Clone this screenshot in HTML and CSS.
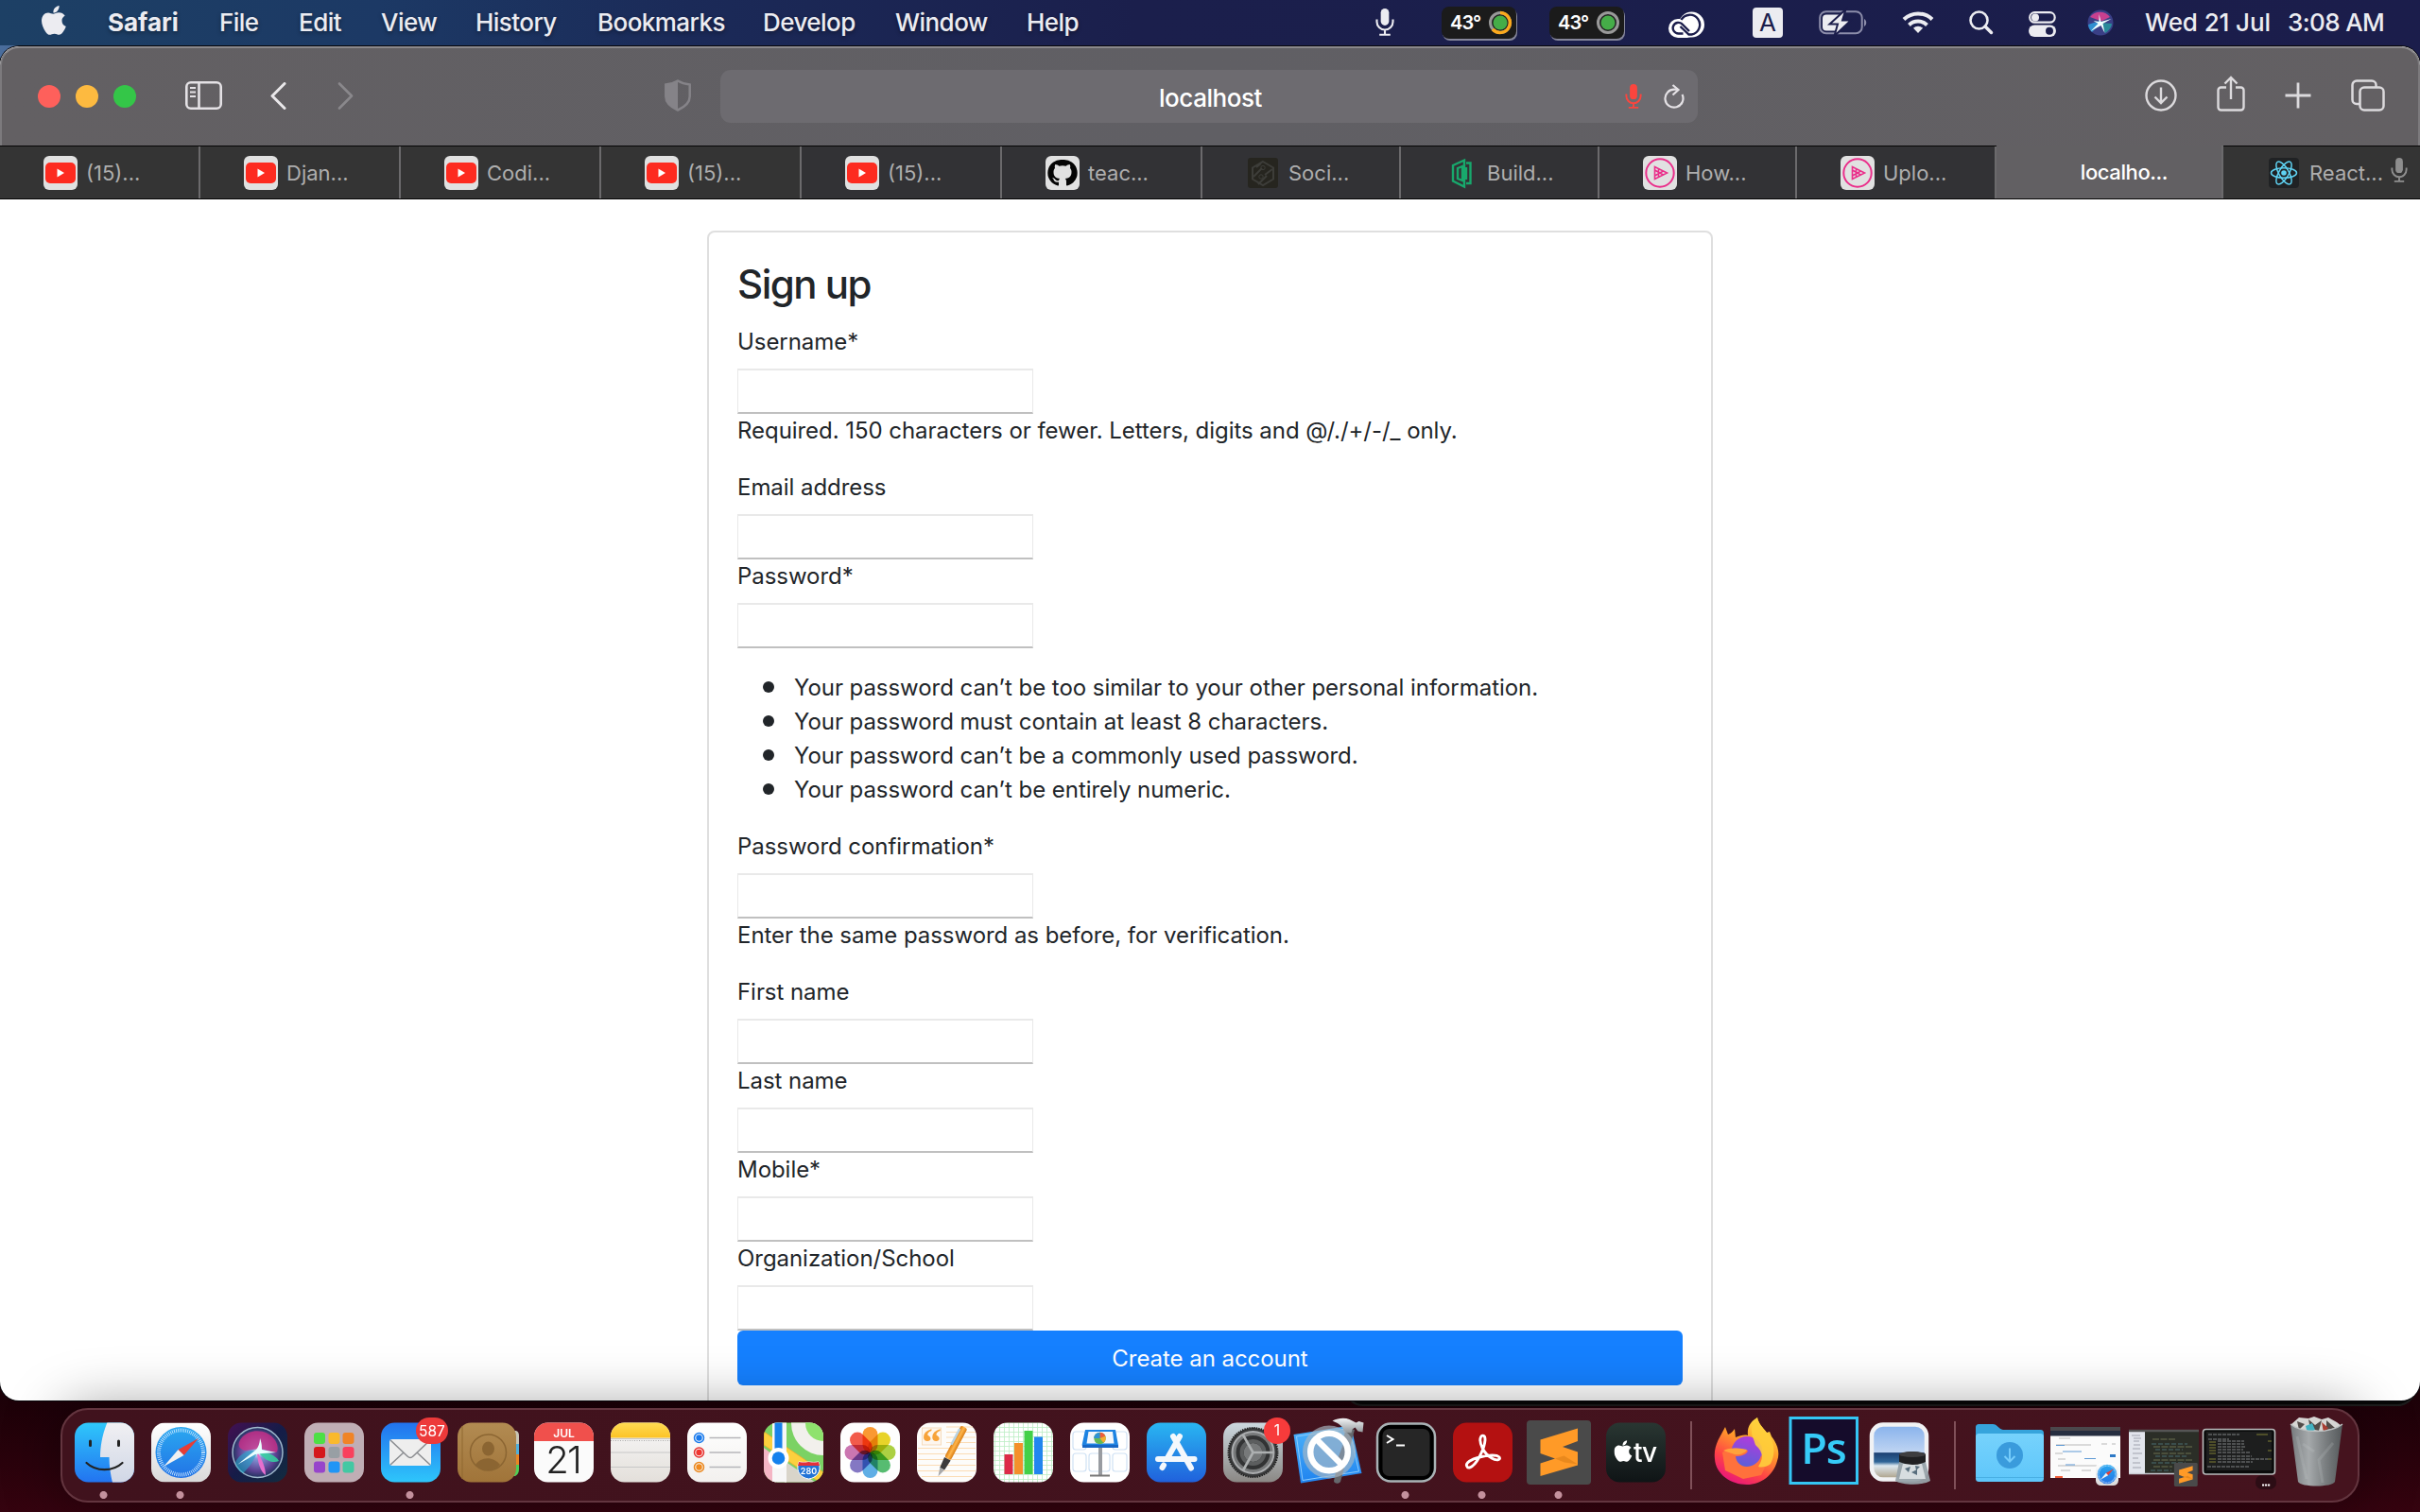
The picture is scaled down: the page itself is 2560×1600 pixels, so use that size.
FILE: index.html
```html
<!DOCTYPE html>
<html lang="en">
<head>
<meta charset="utf-8">
<title>Sign up</title>
<link rel="stylesheet" href="styles.css">
</head>
<body>
<svg class="defs" width="0" height="0" aria-hidden="true">
  <defs>
    <linearGradient id="gFinder" x2="0" y2="1"><stop stop-color="#2fc8fb"/><stop offset="1" stop-color="#2273f0"/></linearGradient>
    <linearGradient id="gFace" x2="0" y2="1"><stop stop-color="#f1f0f3"/><stop offset="1" stop-color="#d0d7e6"/></linearGradient>
    <linearGradient id="gWhite" x2="0" y2="1"><stop stop-color="#fff"/><stop offset="1" stop-color="#d9d9d9"/></linearGradient>
    <linearGradient id="gSoft" x2="0" y2="1"><stop stop-color="#fff"/><stop offset="1" stop-color="#f2f0ee"/></linearGradient>
    <linearGradient id="gCompass" x2="0" y2="1"><stop stop-color="#2aa8f0"/><stop offset="1" stop-color="#2273e6"/></linearGradient>
    <linearGradient id="gMail" x2="0" y2="1"><stop stop-color="#2272ee"/><stop offset="1" stop-color="#2ec6fb"/></linearGradient>
    <linearGradient id="gStore" x2="0" y2="1"><stop stop-color="#29b6f2"/><stop offset="1" stop-color="#2061dc"/></linearGradient>
    <linearGradient id="gBook" x2="0" y2="1"><stop stop-color="#b28b52"/><stop offset="1" stop-color="#a07439"/></linearGradient>
    <linearGradient id="gYellow" x2="0" y2="1"><stop stop-color="#ffdc55"/><stop offset="1" stop-color="#fcc325"/></linearGradient>
    <linearGradient id="gNote" x2="0" y2="1"><stop stop-color="#f8f8f8"/><stop offset="1" stop-color="#e3dfda"/></linearGradient>
    <linearGradient id="gGear" x2="0" y2="1"><stop stop-color="#ccd8df"/><stop offset="1" stop-color="#8b8885"/></linearGradient>
    <linearGradient id="gSiri" x2="1" y2="1"><stop stop-color="#431052"/><stop offset=".5" stop-color="#151c48"/><stop offset="1" stop-color="#122c40"/></linearGradient>
    <radialGradient id="gOrb" cx=".5" cy=".5" r=".5"><stop stop-color="#e9ffff"/><stop offset=".25" stop-color="#8297d6"/><stop offset=".75" stop-color="#5a4090"/><stop offset="1" stop-color="#20345e"/></radialGradient>
    <linearGradient id="gTv" x2="0" y2="1"><stop stop-color="#293632"/><stop offset="1" stop-color="#0f1416"/></linearGradient>
    <linearGradient id="gFox" x1=".8" y1="0" x2=".3" y2="1"><stop stop-color="#fff04a"/><stop offset=".4" stop-color="#ff9a2a"/><stop offset=".72" stop-color="#ff4346"/><stop offset="1" stop-color="#e8157c"/></linearGradient>
    <linearGradient id="gFoxOrb" x1=".6" x2=".3" y2="1"><stop stop-color="#b13bdc"/><stop offset="1" stop-color="#5562d8"/></linearGradient>
    <linearGradient id="gSky" x2="0" y2="1"><stop stop-color="#86b1ec"/><stop offset=".5" stop-color="#bed4f2"/><stop offset=".52" stop-color="#1d4173"/><stop offset=".68" stop-color="#2f6597"/><stop offset=".75" stop-color="#dde9f1"/><stop offset="1" stop-color="#a99a7f"/></linearGradient>
    <linearGradient id="gTrash"><stop stop-color="#777b7e"/><stop offset=".35" stop-color="#a5a9ab"/><stop offset=".7" stop-color="#777b7d"/><stop offset="1" stop-color="#55595b"/></linearGradient>
    <linearGradient id="gFolder" x2="0" y2="1"><stop stop-color="#76d2fc"/><stop offset="1" stop-color="#5ec6fa"/></linearGradient>
    <linearGradient id="gPen"><stop stop-color="#d97c12"/><stop offset=".5" stop-color="#ffb64c"/><stop offset="1" stop-color="#d97c12"/></linearGradient>
    <linearGradient id="gPlan" x2="0" y2="1"><stop stop-color="#4db4fb"/><stop offset="1" stop-color="#1f83ef"/></linearGradient>
    <linearGradient id="gSteel" x2="0" y2="1"><stop stop-color="#f3f5f6"/><stop offset="1" stop-color="#8f9599"/></linearGradient>
    <pattern id="pGrid" width="5" height="5" patternUnits="userSpaceOnUse"><rect width="5" height="5" fill="#fff"/><path d="M0 .5H5M.5 0V5" stroke="#bdeec4" stroke-width=".8"/></pattern>
    <clipPath id="tileClip"><rect x="9" y="15.500" width="63" height="63" rx="14.500"/></clipPath>
    <symbol id="apple" viewBox="0 0 26 31"><path fill="currentColor" d="M18.600 0c.2 2.200-.6 4-1.800 5.400-1.200 1.400-2.700 2.200-4.400 2.100-.2-2 .6-3.900 1.800-5.200C15.400 1 17.200.1 18.600 0zM24.700 10.600c-2.200 1.400-3.300 3.200-3.200 5.500 0 2.800 1.600 4.900 4.300 6-.6 1.900-1.600 3.700-2.900 5.500-1.500 2.100-2.800 3.200-4.400 3.200-1.900 0-2.600-1.100-4.900-1.100-2.400 0-3.300 1.100-5 1.100-1.700 0-3-1.300-4.500-3.400C2.100 24.500 0 20.200 0 16.100c0-5.500 3.300-8.700 7-8.700 2 0 3.900 1.300 5.300 1.300 1.300 0 3.400-1.400 6-1.400 2.600 0 4.900 1.200 6.400 3.300z"/></symbol>
    <symbol id="mic" viewBox="0 0 20 30"><rect x="5.500" width="9" height="18.500" rx="4.500" fill="currentColor"/><path d="M1.200 12v2.500a8.800 8.800 0 0 0 17.600 0V12M10 23.500V28M4 28.700H16" fill="none" stroke="currentColor" stroke-width="2.200"/></symbol>
    <symbol id="youtube" viewBox="0 0 36 36"><rect width="36" height="36" rx="6" fill="#e1e1e1"/><rect x="2" y="7" width="32" height="22" rx="5" fill="#fd2b20"/><path d="M14.500 13.500v9l7.500-4.500z" fill="#fff"/></symbol>
    <symbol id="hexplay" viewBox="0 0 36 36"><rect width="36" height="36" rx="6" fill="#e1e1e1"/><circle cx="18" cy="18" r="14.700" fill="none" stroke="#ea2f8b" stroke-width="2"/><path d="M12.500 11.500v13l13-6.500zM16.500 13.500v9M12.500 15l9 5M12.500 21l9-5" fill="none" stroke="#ea2f8b" stroke-width="1.600"/></symbol>
    <symbol id="compass" viewBox="0 0 63 63"><rect width="63" height="63" rx="14.500" fill="url(#gWhite)"/><circle cx="31.500" cy="31.500" r="27" fill="url(#gCompass)"/><circle cx="31.500" cy="31.500" r="23.500" fill="none" stroke="#d4ecff" stroke-width="4" stroke-dasharray=".8 1.250"/><path d="M50 16.500L34.500 34.500 28.500 28.500z" fill="#e73d35"/><path d="M13 46.500L28.500 28.500l6 6z" fill="#f1f1f1"/></symbol>
    <symbol id="sublime" viewBox="0 0 68 68"><rect width="68" height="68" rx="4" fill="#4a4a4a"/><path d="M14.500 20.500L54 8.500v13.500L38 28l16 5.500v14L14.500 59V45.500L30 40.500l-15.500-5.500z" fill="#ff9a27"/><path d="M30 40.500l9.500-3L54 46.500l-14-2z" fill="#e0811a" opacity=".7"/></symbol>
  </defs>
</svg>

<header class="menubar">
  <nav class="menus">
    <svg class="apple" width="26" height="31"><use href="#apple"/></svg>
    <b>Safari</b><span>File</span><span>Edit</span><span>View</span><span>History</span><span>Bookmarks</span><span>Develop</span><span>Window</span><span>Help</span>
  </nav>
  <div class="status">
    <svg class="s-mic" width="20" height="29"><use href="#mic"/></svg>
    <div class="pill"><span>43°</span><svg width="26" height="26" viewBox="0 0 26 26"><circle cx="13" cy="13" r="10.500" fill="#222" stroke="#999" stroke-width="3"/><path d="M13 2.500a10.500 10.500 0 1 1-8 17.500" fill="none" stroke="#fca91c" stroke-width="3.500"/><circle cx="13" cy="13" r="7.500" fill="#45ad48"/></svg></div>
    <div class="pill"><span>43°</span><svg width="26" height="26" viewBox="0 0 26 26"><circle cx="13" cy="13" r="10.500" fill="#222" stroke="#999" stroke-width="3"/><circle cx="13" cy="13" r="7.500" fill="#45ad48"/></svg></div>
    <svg class="s-cc" width="38" height="28" viewBox="0 0 38 28"><rect y="8" width="30" height="20" rx="10" fill="#fff"/><circle cx="24.500" cy="14" r="13.500" fill="#fff"/><path d="M15.500 23.500H10.500a5.800 5.800 0 1 1 4-10l7.500 7.500M13.500 9a10.500 10.500 0 1 1 11 15.500h-3L12.500 16" fill="none" stroke="#1b1d4b" stroke-width="2.400"/></svg>
    <span class="keybox">A</span>
    <svg class="s-bat" width="51" height="26" viewBox="0 0 51 26" fill="none"><rect x="1.200" y="1.200" width="44.500" height="23" rx="6.500" stroke="#8c8daa" stroke-width="2"/><path d="M48 9c3 1.500 3 6.500 0 8z" fill="#8c8daa"/><rect x="4" y="4.500" width="20" height="17" rx="4" fill="#ececf1"/><path d="M28.500-1L11.500 14.500H20L16.500 27 34 10.500H25z" fill="#ececf1" stroke="#1b1d4b" stroke-width="2"/></svg>
    <svg class="s-wifi" width="34" height="25" viewBox="0 0 34 25" fill="none" stroke="#ececf1" stroke-width="4"><path d="M2 9.500a21.500 21.500 0 0 1 30 0M7.500 15.500a13.500 13.500 0 0 1 19 0"/><path d="M17 24l-5-5.200a7 7 0 0 1 10 0z" fill="#ececf1" stroke="none"/></svg>
    <svg class="s-find" width="26" height="26" viewBox="0 0 26 26" fill="none" stroke="#ececf1" stroke-width="2.600"><circle cx="10.500" cy="10.500" r="9"/><path d="M17 17l6.500 6.500" stroke-width="3.500" stroke-linecap="round"/></svg>
    <svg class="s-ctl" width="29" height="27" viewBox="0 0 29 27"><rect x="1.200" y="1.200" width="26.500" height="10.500" rx="5.200" fill="none" stroke="#ececf1" stroke-width="2.200"/><circle cx="7" cy="6.500" r="4" fill="#ececf1"/><rect y="14.500" width="29" height="12.500" rx="6.200" fill="#ececf1"/><circle cx="22" cy="20.700" r="4" fill="#1b1d4b"/></svg>
    <svg class="s-siri" width="28" height="28" viewBox="0 0 28 28"><circle cx="14" cy="14" r="13.500" fill="#3a3f86"/><path d="M3 8a13 13 0 0 1 21 0l-8 4-5-1z" fill="#c9408f"/><path d="M1 16l12-4 1 3-9 9c-2-2-4-5-4-8z" fill="#2f8fd0"/><path d="M14 14l12 1c0 4-4 8-7 10z" fill="#2a8a9a"/><path d="M12.500 5l2 8 11-3-9 5 2 10-4-8-11 6 8-8-5-3 6 1z" fill="#f0ffff"/></svg>
    <span class="date">Wed 21 Jul</span><span class="time">3:08 AM</span>
  </div>
</header>

<main class="window">
  <div class="toolbar">
    <div class="lights"><i class="red"></i><i class="amber"></i><i class="green"></i></div>
    <svg class="t-side" width="39" height="30" viewBox="0 0 39 30" fill="none" stroke="#e4e1e5" stroke-width="2.600"><rect x="1.300" y="1.300" width="36.400" height="27.400" rx="4.500"/><path d="M14.500 1v28"/><path d="M5 7h6M5 11.500h6M5 16h6" stroke-width="2"/></svg>
    <svg class="t-back" width="17" height="29" viewBox="0 0 17 29" fill="none" stroke="#e9e7ea" stroke-width="3" stroke-linecap="round" stroke-linejoin="round"><path d="M15 1.500L2 14.500l13 13"/></svg>
    <svg class="t-fwd" width="17" height="29" viewBox="0 0 17 29" fill="none" stroke="#8a888c" stroke-width="2.600" stroke-linecap="round" stroke-linejoin="round"><path d="M2 1.500l13 13-13 13"/></svg>
    <svg class="t-shield" width="28" height="34" viewBox="0 0 28 34"><path d="M14 1.500C18 4 22 5 26.700 5.500V18c0 6-5 11-12.700 14.500C6.300 29 1.300 24 1.300 18V5.500C6 5 10 4 14 1.500z" fill="none" stroke="#858388" stroke-width="2.500"/><path d="M14 1.500v31C6.300 29 1.300 24 1.300 18V5.500C6 5 10 4 14 1.500z" fill="#858388"/></svg>
    <div class="address"><span>localhost</span>
      <svg class="a-mic" width="18" height="26"><use href="#mic"/></svg>
      <svg class="a-load" width="22" height="26" viewBox="0 0 22 26" fill="none" stroke="#e4e1e5" stroke-width="2.200"><path d="M19.500 11a9.500 9.500 0 1 1-8-5.300H14"/><path d="M9.500 1l6 5-6 5.500"/></svg>
    </div>
    <div class="actions">
      <svg width="34" height="34" viewBox="0 0 34 34" fill="none" stroke="#dcdadd" stroke-width="2.400"><circle cx="17" cy="17" r="15.500"/><path d="M17 8.500v16M10.500 18.500L17 25l6.500-6.500"/></svg>
      <svg class="t-share" width="30" height="38" viewBox="0 0 30 38" fill="none" stroke="#dcdadd" stroke-width="2.400"><path d="M10 12.500H4.500a3 3 0 0 0-3 3v18a3 3 0 0 0 3 3h21a3 3 0 0 0 3-3v-18a3 3 0 0 0-3-3H20M15 25V2M8.500 8.500L15 2l6.500 6.500"/></svg>
      <svg width="28" height="28" viewBox="0 0 28 28" stroke="#dcdadd" stroke-width="2.800"><path d="M14 .5v27M.5 14h27"/></svg>
      <svg width="36" height="34" viewBox="0 0 36 34" fill="none" stroke="#dcdadd" stroke-width="2.500"><rect x="9.500" y="8.500" width="25" height="24" rx="4.500"/><path d="M9 26H6a4.500 4.500 0 0 1-4.500-4.500V6A4.500 4.500 0 0 1 6 1.500h16A4.500 4.500 0 0 1 26.500 6v2"/></svg>
    </div>
  </div>
  <div class="tabs">
    <div class="tab"><svg class="fav"><use href="#youtube"/></svg>(15)...</div>
    <div class="tab"><svg class="fav"><use href="#youtube"/></svg>Djan...</div>
    <div class="tab"><svg class="fav"><use href="#youtube"/></svg>Codi...</div>
    <div class="tab"><svg class="fav"><use href="#youtube"/></svg>(15)...</div>
    <div class="tab"><svg class="fav"><use href="#youtube"/></svg>(15)...</div>
    <div class="tab"><svg class="fav" viewBox="0 0 36 36"><rect width="36" height="36" rx="6" fill="#e1e1e1"/><path fill="#050505" d="M18 4a14 14 0 0 0-5 27.500c.8.100 1-.4 1-.8v-3c-4 .8-5-1.500-5.300-2.400-.3-.8-1-1.600-1.700-2 2.400-.5 3.300 1.700 3.900 2.300.9.700 2 .7 3.200.4.100-1 .6-1.700 1.200-2-4-.5-6.800-2-6.800-7 0-1.600.5-2.900 1.500-4-.4-1.200-.3-2.700.3-4 1.700 0 3 .9 4 1.700a14 14 0 0 1 7.400 0c1-.8 2.300-1.700 4-1.700.6 1.300.7 2.800.3 4 1 1.100 1.500 2.400 1.500 4 0 5-2.800 6.500-6.800 7 .8.600 1.300 1.600 1.300 3v3.700c0 .4.300.9 1 .8A14 14 0 0 0 18 4z"/></svg>teac...</div>
    <div class="tab"><svg class="fav" viewBox="0 0 36 36"><rect x="2" y="2" width="32" height="32" rx="3" fill="#26251f"/><path d="M18 6l11 6.500v12L18 31 7 24.500v-12zM8 22l9-9M13 30l9-9M20 20l8-6M11 12l5-4" fill="none" stroke="#3d3d39" stroke-width="2"/><circle cx="18" cy="12.500" r="2.200" fill="none" stroke="#3d3d39"/><circle cx="16" cy="22" r="2.200" fill="none" stroke="#3d3d39"/></svg>Soci...</div>
    <div class="tab"><svg class="fav" viewBox="0 0 36 36" fill="none" stroke="#18a86c" stroke-width="2.400"><path d="M9 10l12-5.500v28L9 26.500zM14 13l5-2v15l-5-2zM23 7.500h4.500v21.500H23M23 12v13"/></svg>Build...</div>
    <div class="tab"><svg class="fav"><use href="#hexplay"/></svg>How...</div>
    <div class="tab"><svg class="fav"><use href="#hexplay"/></svg>Uplo...</div>
    <div class="tab active">localho...</div>
    <div class="tab last"><svg class="fav" viewBox="0 0 36 36"><rect x="2" y="2" width="32" height="32" rx="4" fill="#202224"/><g fill="none" stroke="#5fd3f3" stroke-width="1.500"><ellipse cx="18" cy="18" rx="13.500" ry="5.200"/><ellipse cx="18" cy="18" rx="13.500" ry="5.200" transform="rotate(60 18 18)"/><ellipse cx="18" cy="18" rx="13.500" ry="5.200" transform="rotate(120 18 18)"/></g><circle cx="18" cy="18" r="2.800" fill="#5fd3f3"/></svg>React...<svg class="tabmic" width="18" height="26"><use href="#mic"/></svg></div>
  </div>
  <section class="page">
    <form class="card">
      <h1>Sign up</h1>
      <label><span>Username*</span><input type="text"></label>
      <p class="help">Required. 150 characters or fewer. Letters, digits and @/./+/-/_ only.</p>
      <label><span>Email address</span><input type="email"></label>
      <label><span>Password*</span><input type="password"></label>
      <ul>
        <li>Your password can’t be too similar to your other personal information.</li>
        <li>Your password must contain at least 8 characters.</li>
        <li>Your password can’t be a commonly used password.</li>
        <li>Your password can’t be entirely numeric.</li>
      </ul>
      <label><span>Password confirmation*</span><input type="password"></label>
      <p class="help">Enter the same password as before, for verification.</p>
      <label><span>First name</span><input type="text"></label>
      <label><span>Last name</span><input type="text"></label>
      <label><span>Mobile*</span><input type="text"></label>
      <label><span>Organization/School</span><input type="text"></label>
      <button type="button">Create an account</button>
    </form>
  </section>
</main>
<div class="behind"></div>

<footer class="dock">
  <svg class="app on" viewBox="0 0 81 98"><g clip-path="url(#tileClip)"><rect x="9" y="15" width="63" height="64" fill="url(#gFinder)"/><path d="M43.500 15C37 31 36 44 36 52h9.500c0 9 1.500 19 3.500 27h24V15z" fill="url(#gFace)"/></g><path d="M25.500 35v4.500M55.500 35v4.500" stroke="#222" stroke-width="3" stroke-linecap="round"/><path d="M21.500 58c10 9.500 28 9.500 38 0" fill="none" stroke="#222" stroke-width="2.200" stroke-linecap="round"/></svg>
  <svg class="app on" viewBox="0 0 81 98"><use href="#compass" x="9" y="15.500" width="63" height="63"/></svg>
  <svg class="app" viewBox="0 0 81 98"><rect x="9" y="15.500" width="63" height="63" rx="14.500" fill="url(#gSiri)"/><circle cx="40.500" cy="47" r="26.500" fill="url(#gOrb)" stroke="#9fb8cd" stroke-width="1.500"/><path d="M24 31c8-9 26-10 35 3 4 7 3 12 1 13L43 43l-16 2c-8-2-8-8-3-14z" fill="#cf2f86" opacity=".75"/><path d="M17 58c3-9 13-14 24-13-4 9-9 18-16 24-4-2-7-6-8-11z" fill="#23a6c9" opacity=".6"/><path d="M41 46c9 0 19 4 22 10-6 3-15 0-22-10z" fill="#34d39f" opacity=".85"/><path d="M40 46c5 8 9 17 9 25-5-3-9-14-9-25z" fill="#e66fce"/><path d="M19 60l20-16c3-3 4-9 4-12 2 5 2 9 2 12l15 3-14 1-8 1z" fill="#e9ffff"/></svg>
  <svg class="app" viewBox="0 0 81 98"><rect x="9" y="15.500" width="63" height="63" rx="14.500" fill="#c0aeb5"/><g><rect x="19" y="26" width="12" height="12" rx="3" fill="#4ddf45"/><rect x="34.500" y="26" width="12" height="12" rx="3" fill="#fab92c"/><rect x="49.500" y="26" width="12" height="12" rx="3" fill="#f08427"/><rect x="19" y="41" width="12" height="12" rx="3" fill="#d5181d"/><rect x="34.500" y="41" width="12" height="12" rx="3" fill="#989fa4"/><rect x="49.500" y="41" width="12" height="12" rx="3" fill="#f9405d"/><rect x="19" y="56.500" width="12" height="12" rx="3" fill="#9745cb"/><rect x="34.500" y="56.500" width="12" height="12" rx="3" fill="#2195f5"/><rect x="49.500" y="56.500" width="12" height="12" rx="3" fill="#43c8a3"/></g></svg>
  <svg class="app on" viewBox="0 0 81 98"><rect x="9" y="15.500" width="63" height="63" rx="14.500" fill="url(#gMail)"/><rect x="18" y="33" width="44" height="28" rx="3" fill="#eee"/><path d="M19 34l18 17c2 2 4 2 6 0l18-17M19 60l14-13M61 60L47 47" fill="none" stroke="#8a8c90" stroke-width="1.500"/><rect x="46" y="10" width="34" height="28" rx="14" fill="#ed3a3a"/><text class="bdg" x="63" y="29.500">587</text></svg>
  <svg class="app" viewBox="0 0 81 98"><path d="M66 24h5q3 1 3 5v9h-8z" fill="#c9c6b6"/><path d="M66 38h8v12h-8z" fill="#4fb0dc"/><path d="M66 49h8v11h-8z" fill="#ec8523"/><path d="M66 60h8v5q0 5-4 7h-4z" fill="#4fce56"/><rect x="9" y="15.500" width="62" height="63" rx="14.500" fill="url(#gBook)"/><path d="M14 19v56" stroke="#8f6831" stroke-width="1"/><g fill="#8b6532"><path d="M28 60c6-9 19-9 26 0-7 8-19 8-26 0z"/><ellipse cx="41.500" cy="43" rx="6.500" ry="7.500"/></g><circle cx="41.500" cy="47" r="19" fill="none" stroke="#8b6532" stroke-width="1.500"/></svg>
  <svg class="app" viewBox="0 0 81 98"><g clip-path="url(#tileClip)"><rect x="9" y="15" width="63" height="64" fill="#fbfbfb"/><rect x="9" y="15" width="63" height="20" fill="#f0504c"/></g><text class="cal" x="40.500" y="31">JUL</text><text class="day" x="39.500" y="69">21</text></svg>
  <svg class="app" viewBox="0 0 81 98"><g clip-path="url(#tileClip)"><rect x="9" y="15" width="63" height="64" fill="url(#gNote)"/><rect x="9" y="15" width="63" height="16.500" fill="url(#gYellow)"/><path d="M9 32.500h63M9 47h63M9 62.500h63" stroke="#c8c8c8"/><path d="M9 34.500h63" stroke="#aaa" stroke-dasharray="1 1.500"/></g></svg>
  <svg class="app" viewBox="0 0 81 98"><rect x="9" y="15.500" width="63" height="63" rx="14.500" fill="url(#gSoft)"/><path d="M32.500 31.500h33M32.500 47h33M32.500 62.500h33" stroke="#b6b6ba" stroke-width="1.300"/><g stroke-width="1.500" fill="none"><circle cx="21.500" cy="31.500" r="5" stroke="#1879ec"/><circle cx="21.500" cy="47" r="5" stroke="#e5302f"/><circle cx="21.500" cy="62.500" r="5" stroke="#ea871d"/></g><circle cx="21.500" cy="31.500" r="3.200" fill="#1879ec"/><circle cx="21.500" cy="47" r="3.200" fill="#f03530"/><circle cx="21.500" cy="62.500" r="3.200" fill="#f18a1d"/></svg>
  <svg class="app" viewBox="0 0 81 98"><g clip-path="url(#tileClip)"><rect x="9" y="15" width="63" height="64" fill="#7bd264"/><circle cx="72" cy="16" r="34" fill="#f2f0ec"/><circle cx="72" cy="16" r="19" fill="#8fe26d"/><path d="M9 25l63 43v13L9 39z" fill="#fbd03e" stroke="#f5a92a" stroke-width=".8"/><path d="M9 42l13 10v27H9z" fill="#f4b6c5"/><path d="M31 56l33 23H31z" fill="#d9d5ca"/><path d="M18 15h15v64H18z" fill="#f7f7f7"/><path d="M20.500 15h8v32h-8z" fill="#1781eb"/></g><circle cx="24.500" cy="53" r="11" fill="#fff"/><circle cx="24.500" cy="53" r="6.800" fill="#1581ed"/><path d="M46 57q5 1 10.500 0 5.500 1 10.500 0c4 11-3 17-10.500 18C49 74 42 68 46 57z" fill="#2273d6" stroke="#fff"/><path d="M46 57q5 1 10.500 0 5.500 1 10.500 0l1 4H45z" fill="#e5303a"/><text class="road" x="56.500" y="69.500">280</text></svg>
  <svg class="app" viewBox="0 0 81 98"><rect x="9" y="15.500" width="63" height="63" rx="14.500" fill="#fefefe"/><g class="petals"><rect x="32.500" y="20" width="16" height="27" rx="8" fill="#fb9a32"/><rect x="32.500" y="20" width="16" height="27" rx="8" fill="#e9d429" transform="rotate(45 40.500 47)"/><rect x="32.500" y="20" width="16" height="27" rx="8" fill="#add142" transform="rotate(90 40.500 47)"/><rect x="32.500" y="20" width="16" height="27" rx="8" fill="#57bd71" transform="rotate(135 40.500 47)"/><rect x="32.500" y="20" width="16" height="27" rx="8" fill="#5fafe6" transform="rotate(180 40.500 47)"/><rect x="32.500" y="20" width="16" height="27" rx="8" fill="#8578c4" transform="rotate(225 40.500 47)"/><rect x="32.500" y="20" width="16" height="27" rx="8" fill="#cc76b2" transform="rotate(270 40.500 47)"/><rect x="32.500" y="20" width="16" height="27" rx="8" fill="#f35b4b" transform="rotate(315 40.500 47)"/></g></svg>
  <svg class="app" viewBox="0 0 81 98"><rect x="9" y="15.500" width="63" height="63" rx="14.500" fill="#fdfcfa"/><path d="M40 20h28M40 25.500h31M40 31h31M40 36.500h31M10 42.500h61M10 48.500h61M10 54.500h61M10 60.500h61M10 66.500h61M14 72.500h53" stroke="#fbdcb4" stroke-width="1.200"/><rect x="14.500" y="21" width="20" height="18" fill="#fdf6ee" stroke="#f6dcbd"/><text class="quote" x="24.500" y="50">“</text><g transform="rotate(28 43 50)"><rect x="39.500" y="16" width="7.500" height="38" rx="2.500" fill="url(#gPen)"/><path d="M39.500 54H47l-1 12h-5.500z" fill="#3b3b3d"/><path d="M40.500 66H46l-2.800 9z" fill="#aaa"/><path d="M39.800 20v19" stroke="#b8d3e3" stroke-width="2.500"/></g></svg>
  <svg class="app" viewBox="0 0 81 98"><rect x="9" y="15.500" width="63" height="63" rx="14.500" fill="url(#pGrid)"/><path d="M20.500 49h9v21h-9z" fill="#dd2b48"/><path d="M31 37h9v33h-9z" fill="#f4902b"/><path d="M41.500 24h9v46h-9z" fill="#43d048"/><path d="M52 30.500h9V70h-9z" fill="#2186ee"/></svg>
  <svg class="app" viewBox="0 0 81 98"><rect x="9" y="15.500" width="63" height="63" rx="14.500" fill="#fff"/><g fill="none" stroke="#cfe1f4" stroke-width="1.200"><rect x="12" y="25" width="14" height="19" rx="3"/><rect x="12" y="48" width="14" height="19" rx="3"/><rect x="29" y="48" width="22" height="19" rx="3"/><rect x="54" y="25" width="15" height="19" rx="3"/><rect x="54" y="48" width="15" height="19" rx="3"/></g><path d="M39 40h4v31h-4z" fill="#999ca1"/><path d="M30 70.500h21v2H30z" fill="#777"/><path d="M25 23h32l3 16.500H21.500z" fill="#1d83e2"/><path d="M28.500 25h25.500l1.500 12.500H26.500z" fill="#f3f6fa"/><circle cx="40.500" cy="32" r="6.200" fill="#63b956"/><path d="M40.500 32v-6.200a6.200 6.200 0 0 1 5.800 4z" fill="#f05b3b"/><path d="M40.500 32l5.800-2.200a6.200 6.200 0 0 1-2 7z" fill="#f6ac31"/><path d="M40.500 32h-6.200a6.200 6.200 0 0 1 6.200-6.200z" fill="#2f92d4"/><path d="M22 39h38v3H22z" fill="#1766c5"/></svg>
  <svg class="app" viewBox="0 0 81 98"><rect x="9" y="15.500" width="63" height="63" rx="14.500" fill="url(#gStore)"/><g stroke="#f4f8fc" stroke-width="6" stroke-linecap="round"><path d="M44 30L31.500 52M37 30l19 33.500M21 54h38.500M27 60.500l-1.500 2.500"/></g></svg>
  <svg class="app" viewBox="0 0 81 98"><rect x="9" y="15.500" width="63" height="63" rx="14.500" fill="url(#gGear)"/><circle cx="40.500" cy="47" r="26" fill="#3a3b3c" stroke="#232323" stroke-width="2" stroke-dasharray="1.500 1"/><circle cx="40.500" cy="47" r="22" fill="#77797a" stroke="#aaacae" stroke-width="2"/><circle cx="40.500" cy="47" r="14" fill="none" stroke="#323334" stroke-width="8"/><circle cx="40.500" cy="47" r="12" fill="none" stroke="#5c5e5f" stroke-width="4"/><path d="M40.500 47h22M40.500 47L30 28.500M40.500 47L30 66" stroke="#adb0b1" stroke-width="2.600"/><circle cx="66" cy="24" r="14" fill="#f73b3b"/><text class="bdg" x="66" y="29">1</text></svg>
  <svg class="app" viewBox="0 0 81 98"><path d="M2.500 28L63 18.500 74.500 69 10 79.500z" fill="url(#gPlan)"/><path d="M5.500 30L61 21.500 71.500 67 12 76.500z" fill="none" stroke="#8ccbfc"/><path d="M58 20l9 3-15 55c-2 3-7 2-7-1z" fill="#65686c"/><path d="M43.500 13.500c6-3 13-3.500 18-1.500l7 3.500 3-1.500 5 1.500-1 10-5-1-3-4-3 2-1 4-8-1c0-6-5-9-12-12z" fill="url(#gSteel)"/><circle cx="40" cy="46.500" r="28" fill="#aab7c3" opacity=".66"/><circle cx="40" cy="46.500" r="20" fill="#7eabd6" fill-opacity=".6"/><path d="M57 34l3 10-6 18-6-6z" fill="#7b8590" opacity=".8"/><circle cx="40" cy="46.500" r="19.800" fill="none" stroke="#fff" stroke-width="6.500"/><path d="M26.500 33l27 27" stroke="#fff" stroke-width="6.500"/></svg>
  <svg class="app on" viewBox="0 0 81 98"><rect x="10" y="16.500" width="61" height="61" rx="14" fill="#000" stroke="#a9b2b5" stroke-width="2.500"/><rect x="15.500" y="22" width="50" height="50" rx="7" fill="#262626"/><path d="M20 29l6.500 4-6.500 4" fill="none" stroke="#fff" stroke-width="2"/><path d="M30 39.500h9" stroke="#fff" stroke-width="2"/></svg>
  <svg class="app on" viewBox="0 0 81 98"><rect x="9" y="15.500" width="63" height="63" rx="14.500" fill="#b41111"/><path d="M24 62c-3-4 5-8 13-10 8-2 18-3 21 0 2 3-3 4-8 1-9-5-13-16-12-21 1-4 5-4 5 1 0 8-7 23-13 28-2 2-5 3-6 1z" fill="none" stroke="#fff" stroke-width="2.900"/></svg>
  <svg class="app on" viewBox="0 0 81 98"><use href="#sublime" x="6" y="13" width="68" height="68"/></svg>
  <svg class="app" viewBox="0 0 81 98"><rect x="9" y="15.500" width="63" height="63" rx="14.500" fill="url(#gTv)"/><g color="#fff"><use href="#apple" x="17.500" y="34" width="19" height="23"/></g><text class="tv" x="38" y="56.500">tv</text></svg>
  <i class="sep"></i>
  <svg class="app" viewBox="0 0 81 98"><path d="M11 33l7-13 3 8c3-1 5-3 7-6l1 9c5-2 9-3 13-2-1-9 3-15 10-19 1 6 6 11 10 16l3-1 2 5c7 9 9 18 6 26-4 15-17 25-32 25C24 81 8 70 7 54c-1-8 1-15 4-21z" fill="url(#gFox)"/><circle cx="41" cy="46.500" r="16.500" fill="url(#gFoxOrb)"/><path d="M15 47c7-3 10-5 17-4 5 1 8 1 10 2-1 4-7 6-13 6 1 9 9 13 17 10 5-2 9-6 10-11l7 7-7 14-19 4-19-9z" fill="#ff713c"/><path d="M48 33c-5-11 0-18 4-23 1 6 6 11 10 16 8 9 10 21 4 33-5 4-10 4-13 3 6-9 5-16-3-23z" fill="#ffce3b" opacity=".9"/><path d="M16 45c7-3 13-3 25-1-2 4-8 6-13 5z" fill="#ffa33c"/></svg>
  <svg class="app" viewBox="0 0 81 98"><rect x="6" y="10.500" width="70.500" height="69" fill="#150c2b" stroke="#34c6f4" stroke-width="3"/><text class="ps" x="41" y="58.500">Ps</text></svg>
  <svg class="app" viewBox="0 0 81 98"><rect x="11" y="17.500" width="58" height="58" rx="12" fill="url(#gSky)" stroke="#f1f2f4" stroke-width="4.500"/><path d="M40 57h28l5 20c-8 5-29 5-37 0z" fill="#98a3aa" opacity=".95"/><path d="M44 59l-4 16h28l-4-16z" fill="#d7dde0"/><path d="M46 64l6-2-2 6zM53 68l6-3v6zM57 61l5 1-4 4z" fill="#586e7d"/><path d="M40 49q14-6 28 0v8q-14 6-28 0z" fill="#202022"/><ellipse cx="54" cy="49" rx="14" ry="3" fill="#3e3e40"/></svg>
  <i class="sep"></i>
  <svg class="app" viewBox="0 0 81 98"><path d="M4 21c0-3 1-4 4-4h14c5 0 6 5 11 6h39c3 0 4 1 4 4v10H4z" fill="#36a4dc"/><path d="M4 31c0-3 1-4 4-4h64c3 0 4 1 4 4v43c0 3-1 4-4 4H8c-3 0-4-1-4-4z" fill="url(#gFolder)"/><path d="M4 73.500h72" stroke="#49b0e4"/><circle cx="40" cy="50" r="14" fill="#3a9bdc"/><path d="M40 42.500V56M34.500 51l5.500 5.500 5.500-5.500" fill="none" stroke="#75ccfb" stroke-width="2"/></svg>
  <svg class="app" viewBox="0 0 81 98"><rect x="2" y="20" width="74" height="54" fill="#fbfbfb"/><rect x="2" y="20" width="74" height="4.500" fill="#4b484c"/><rect x="2" y="24" width="74" height="5.500" fill="#262e40"/><g stroke="#aaa" stroke-width=".8"><path d="M11 32h12M8 39h37M7 48h8M10 61h60M10 54h8M56 38h6M67 38h4M13 66h10M35 66h10"/></g><path d="M8 39.500h9M15 46h20M38 53.500h12M18 60h10" stroke="#5f9ad5" stroke-width="1.100"/><path d="M65 49h6v3h-6z" fill="#2e79c6"/><path d="M7 73h8" stroke="#ef5a35" stroke-width="2"/><use href="#compass" x="50" y="58" width="24" height="24"/></svg>
  <svg class="app" viewBox="0 0 81 98"><rect x="4" y="23" width="74" height="47" fill="#2b2e27"/><rect x="4" y="23" width="17" height="47" fill="#e2e5ec"/><path d="M4 24h74" stroke="#555" stroke-width="2.500"/><g stroke-width="1.100"><path d="M7 29h9M9 32h8M9 35h6M9 39h7M8 43h8M8 48h10M8 53h6M8 58h8M8 63h9" stroke="#9fa4ad"/><path d="M29 33h24M30 41h41M30 48h40M30 55h42M30 62h20" stroke="#6c7150" stroke-dasharray="7 1.500"/><path d="M28 38h38M32 44h29M32 51h34M28 58h36M27 66h22" stroke="#4a6c72" stroke-dasharray="5 2"/></g><path d="M4 69.500h50" stroke="#c8ccd2" stroke-width="1.500"/><use href="#sublime" x="51.500" y="58" width="25.500" height="25"/></svg>
  <svg class="app" viewBox="0 0 81 98"><rect x="1.500" y="22.500" width="76" height="47.500" rx="3" fill="#0a0b0b" stroke="#b9bdbd" stroke-width="1.600"/><rect x="5" y="25" width="69" height="41" fill="#1d1e1e"/><g fill="none" stroke-width=".8"><path d="M7 28h33M7 33h22M17 35h28M17 38h28M17 41h29M17 44h27M17 47h35M17 51h36M17 54h53M17 57h37M6 62h45" stroke="#9a9d9f" stroke-dasharray="4 1"/><path d="M58 28h12M8 36h7M8 39h7M8 42h7M8 45h7M8 48h7M8 54h7M8 57h7M70 35h4M70 45h4M70 54h4" stroke="#9b973a"/></g><rect x="57" y="71" width="22" height="15" rx="7" fill="#2c0d15"/><path d="M64 81.500h2.200M67 81.500h2.200M70 81.500h2.200" stroke="#fff" stroke-width="2"/></svg>
  <svg class="app" viewBox="0 0 81 98"><path d="M14 17l8-7 10 1 6-2 8 3 7-2 9 5 5 4-2 13H18z" fill="#d6d6d4"/><path d="M20 14l8 3-6 6zM32 12l7 6 7-5-3 11-9-2zM51 13l9 8-9 2z" fill="#514b48"/><path d="M29 19l7-3 3 7-8 4z" fill="#42b2c2"/><path d="M46 15l7 6-5 5z" fill="#a83e33"/><path d="M13 17c12 10 43 10 55 0l-8 61c-3 6-36 6-39 0z" fill="url(#gTrash)"/><path d="M13 17c12 10 43 10 55 0" fill="none" stroke="#bcc0c1" stroke-width="1.400"/><path d="M20 30l10 45M58 37L43 55l4 24M26 38l12 8" fill="none" stroke="#d0d4d5" stroke-width="3" opacity=".17"/></svg>
</footer>
</body>
</html>
```
FILE: styles.css
```css
* { box-sizing: border-box; }

body {
  margin: 0;
  width: 2560px;
  height: 1600px;
  overflow: hidden;
  font-family: Inter, "Liberation Sans", sans-serif;
  background: linear-gradient(90deg, #4a6d9c 0, #202a5a 540px, #1b1d4b 1200px) 0 0 / 100% 90px no-repeat, linear-gradient(#1c0108 1480px, #35030f 1600px);
}

svg { display: block; flex: none; }
.defs { position: absolute; }

/* Menu bar */
.menubar {
  height: 48px;
  display: flex;
  justify-content: space-between;
  background: linear-gradient(90deg, #1d4065, #1c3965 400px, #1b2a58 730px, #1b1f4c 1200px, #1b1d4b);
  color: #ececf1;
  font-size: 26px;
  line-height: 48px;
  white-space: nowrap;
}
.menus {
  display: grid;
  grid-template-columns: 70px 118px 84px 87px 100px 129px 175px 140px 139px 80px;
  padding-left: 44px;
  font-weight: 500;
  letter-spacing: -.55px;
  text-shadow: 0 2px 4px #0006;
}
.menus b { font-weight: 700; letter-spacing: 0; }
.apple { margin-top: 6px; }
.status { display: flex; align-items: center; width: 1105px; }
.s-mic { margin-right: 50px; margin-top: -2px; }
.pill {
  display: flex;
  align-items: center;
  justify-content: space-between;
  width: 79px;
  height: 34px;
  margin-right: 35px;
  padding: 0 4px 0 9px;
  border-radius: 8px;
  background: #1b1b1b;
  box-shadow: 1px 2px 0 #85869a;
  color: #fff;
  font-size: 20px;
  font-weight: 600;
  letter-spacing: -.9px;
}
.s-cc { margin: 3px 51px 0 12px; }
.keybox {
  width: 32px;
  height: 32px;
  margin-right: 38px;
  border-radius: 4px;
  background: #ececf1;
  color: #1b1d4b;
  font-size: 26px;
  line-height: 32px;
  text-align: center;
}
.s-bat { margin-right: 37px; overflow: visible; }
.s-wifi { margin-right: 37px; margin-top: -2px; }
.s-find { margin-right: 37px; }
.s-ctl { margin-right: 33px; margin-top: 2px; }
.s-siri { margin-right: 33px; }
.date { width: 151px; letter-spacing: -.1px; font-weight: 500; margin-top: -1px; }
.time { letter-spacing: -.6px; font-weight: 500; margin-top: -1px; }

/* Browser window */
.window {
  position: relative;
  z-index: 1;
  height: 1433px;
  margin-top: 1px;
  border-radius: 20px;
  overflow: hidden;
  background: #fff;
  box-shadow: 0 0 0 1px #08080c;
}
.toolbar {
  display: flex;
  align-items: center;
  height: 105px;
  padding-bottom: 3px;
  border-top: 2px solid #8a888b;
  border-left: 2px solid #7c7a7d;
  border-right: 2px solid #7c7a7d;
  border-radius: 20px 20px 0 0;
  background: linear-gradient(90deg, #636063, #605f64 50%, #636063);
}
.lights { display: flex; gap: 16px; margin: 2px 52px 0 38px; }
.lights i { width: 24px; height: 24px; border-radius: 50%; }
.red { background: #fe605b; }
.amber { background: #fdba40; }
.green { background: #34c648; }
.t-back { margin-left: 51px; }
.t-fwd { margin-left: 54px; }
.t-shield { margin-left: 329px; }
.address {
  display: flex;
  align-items: center;
  width: 1034px;
  height: 56px;
  margin: 2px 0 0 31px;
  padding-left: 464px;
  border-radius: 11px;
  background: #6d6b70;
  color: #fff;
  font-size: 26px;
}
.address span { width: 493px; letter-spacing: -.45px; font-weight: 500; margin-top: 2px; }
.a-mic { color: #fb453e; }
.a-load { margin-left: 23px; }
.actions { display: flex; align-items: center; gap: 42px; margin-left: 473px; }
.t-share { margin-top: -4px; }

.tabs {
  display: grid;
  grid-template-columns: repeat(6, 212px) 210px 210px 209px 211px 240px 1fr;
  height: 57px;
  border-top: 1px solid #050505;
  border-bottom: 1px solid #050505;
  background: #343434;
  color: #aeaeae;
  font-size: 22px;
  letter-spacing: 0;
}
.tab {
  display: flex;
  align-items: center;
  gap: 9px;
  padding-left: 46px;
  border-right: 2px solid #6b6a6c;
}
.tab:nth-child(n+5) { background: #323235; }
.fav { width: 36px; height: 36px; }
.tab.active {
  justify-content: center;
  margin-top: -1px;
  padding: 0 0 0 32px;
  background: #626063;
  color: #fff;
  font-weight: 500;
  letter-spacing: -.4px;
}
.tab.last { background: #343434; border: 0; }
.tabmic { margin: -5px 0 0 -1px; color: #8e8e8e; }

/* Sign up form */
.page { padding-top: 33px; color: #212529; font-size: 24px; line-height: 36px; }
.card {
  width: 1064px;
  height: 1400px;
  margin: 0 auto;
  padding: 30px;
  border: 2px solid #dfdfdf;
  border-radius: 8px;
}
h1 { margin: 0 0 18px; font-size: 42px; line-height: 50px; font-weight: 500; letter-spacing: -1.5px; }
label { display: block; }
label span { display: block; margin-bottom: 10px; }
label span, .help, li { letter-spacing: -.05px; }
input {
  display: block;
  width: 313px;
  height: 48px;
  border: 1px solid #e9e9e9;
  border-top-width: 2px;
  border-bottom: 2px solid #c0c0c0;
  background: #fff;
}
.help { margin: 0 0 24px; }
ul { margin: 24px 0; padding-left: 60px; list-style: none; }
li::before {
  content: "";
  float: left;
  width: 12px;
  height: 12px;
  margin: 11px 0 0 -33px;
  border-radius: 50%;
  background: #212529;
}
button {
  display: block;
  width: 1000px;
  height: 58px;
  border: 0;
  border-radius: 6px;
  background: #1580ff;
  color: #fff;
  font: 24px/58px Inter, sans-serif;
  letter-spacing: -.05px;
}

/* Edge of the window underneath */
.behind {
  height: 27px;
  width: 1134px;
  margin: -21px 0 0 1422px;
  border: 2px solid #1d1d1d;
  border-radius: 0 0 20px 20px;
  background: #070707;
}

/* Dock */
.dock {
  position: relative;
  z-index: 2;
  display: flex;
  width: 2432px;
  height: 100px;
  margin: 2px 0 0 64px;
  padding-left: 4px;
  border: 2px solid #63353f;
  border-radius: 29px;
  background: linear-gradient(90deg, #40121d, #45131e);
  box-shadow: 0 0 60px #0006;
}
.app { width: 81px; height: 98px; margin-top: -2px; overflow: visible; }
.on { background: radial-gradient(circle at 39.500px 92px, #c4919d 3.600px, #c4919d00 4.400px); }
.sep { width: 36px; height: 72px; margin-top: 12px; background: linear-gradient(#805059, #805059) 17px 0 / 2px 100% no-repeat; }
.petals rect { mix-blend-mode: multiply; }
text { font-family: Inter, sans-serif; text-anchor: middle; fill: #fff; }
.bdg { font-size: 15.500px; }
.cal { font-size: 12px; font-weight: 600; }
.day { font-size: 40px; font-weight: 300; fill: #222; letter-spacing: -2px; }
.road { font-size: 9px; font-weight: 600; }
.quote { font-family: "Liberation Serif", serif; font-weight: 700; font-size: 42px; fill: #f7a33a; }
.tv { font-size: 28px; font-weight: 500; text-anchor: start; letter-spacing: -1px; }
.ps { font-family: "Open Sans", sans-serif; font-size: 45px; font-weight: 600; fill: #36cbf8; letter-spacing: -1px; }
```
